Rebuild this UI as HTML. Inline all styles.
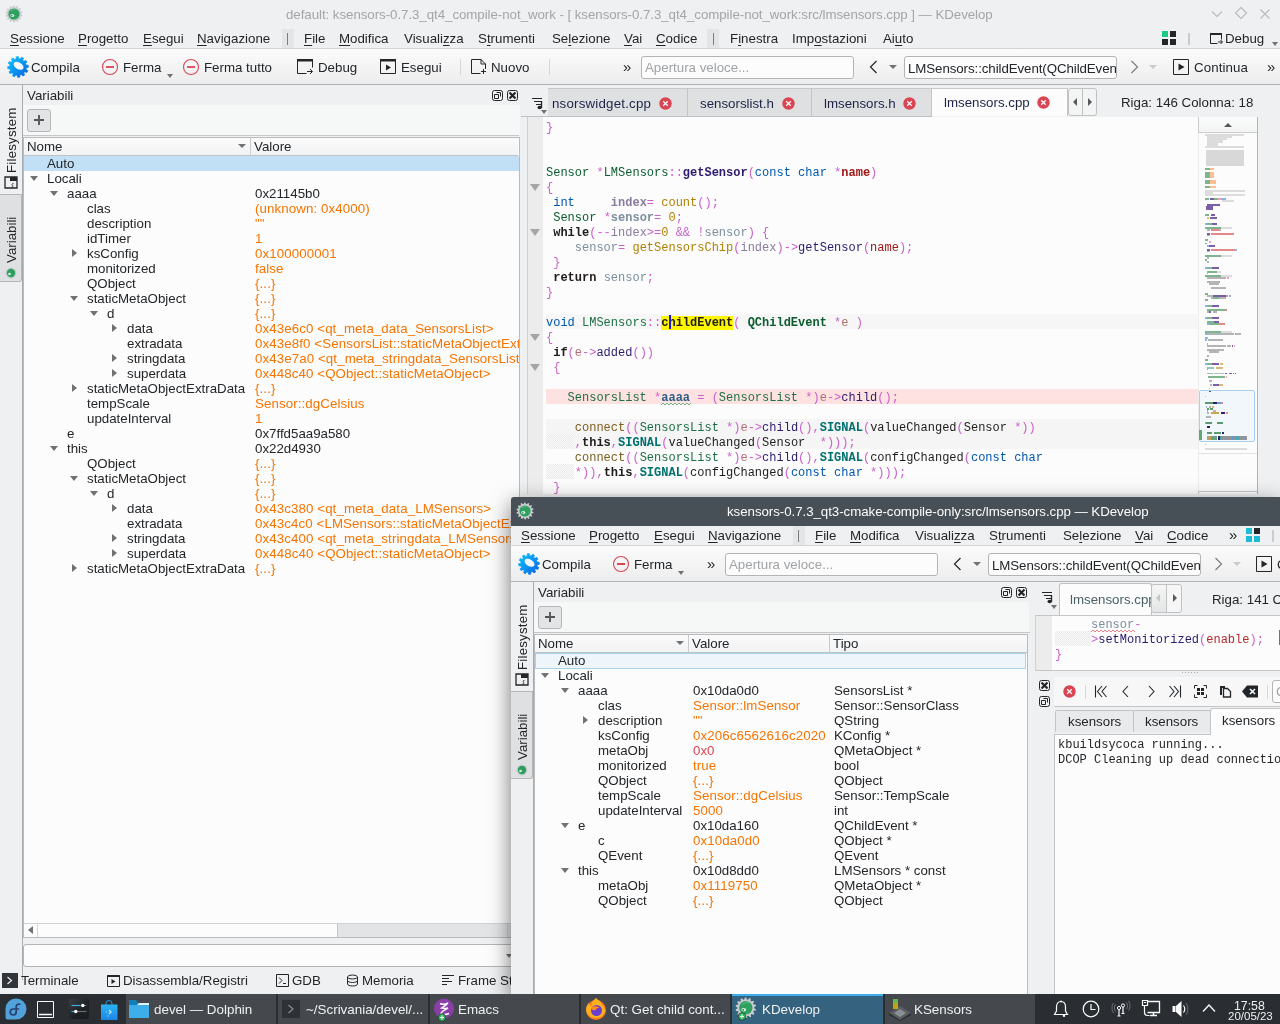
<!DOCTYPE html>
<html><head><meta charset="utf-8"><title>KDevelop</title>
<style>
*{box-sizing:border-box;margin:0;padding:0}
html,body{width:1280px;height:1024px;overflow:hidden}
body{position:relative;background:#eff0f1;font-family:"Liberation Sans",sans-serif;font-size:13.3px;color:#232629}
.a{position:absolute}
.t{position:absolute;white-space:pre;line-height:16px;height:16px;margin-top:1px}
u{text-decoration:underline;text-underline-offset:2px}
svg{position:absolute;overflow:visible}
/* main window */
#w1,#w2,.tb{will-change:transform}
#w1{position:absolute;left:0;top:0;width:1280px;height:994px;background:#eff0f1;overflow:hidden}
#w2{position:absolute;left:511px;top:497px;width:769px;height:497px;background:#eff0f1;overflow:hidden;box-shadow:0 7px 22px 0 rgba(0,0,0,.55);border-radius:3px 0 0 0}
.tool{background:linear-gradient(#fbfbfb,#ededee)}
.hl{position:absolute;height:1px;background:#bcbfc1}
.vl{position:absolute;width:1px;background:#bcbfc1}
.view{position:absolute;background:#fcfcfc;border:1px solid #b9bbbd}
.o{color:#f67400;letter-spacing:.1px}.r{color:#da4453}
.row{position:absolute;left:0;height:15px;line-height:15px;white-space:pre;margin-top:-1px}
.row span{position:absolute;top:0}
.arr{position:absolute;width:0;height:0}
.ad{border-left:4px solid transparent;border-right:4px solid transparent;border-top:5px solid #6e7275}
.ar{border-top:4px solid transparent;border-bottom:4px solid transparent;border-left:5px solid #6e7275}
.code{position:absolute;font-family:"Liberation Mono",monospace;font-size:12px;letter-spacing:0;line-height:15px;white-space:pre;color:#1f1c1b}
.code b{font-weight:bold}
.cl{position:absolute;left:0;height:15px;white-space:pre}
.m{color:#ca60ca}.g{color:#0a5c2e}.bl{color:#0057ae}.dp{color:#2b1a6e}.dr{color:#a01818}.gv{color:#8b7b9e}.go{color:#b08000}.gc{color:#7c5e1c}.pe{color:#b56d7d}.gb{color:#7a8e9e}.br{color:#b36e6c}.tl{color:#00706e}
.btn{position:absolute;border:1px solid #b4b6b8;border-radius:3px;background:#e3e4e5}
.tab{position:absolute;top:0;height:28px;border-right:1px solid #c2c4c6;border-top:1px solid #c6c8ca;background:#dfe0e2;color:#1c2446}
.tab .t{margin-top:0}
.tb{position:absolute;top:994px;left:0;width:1280px;height:30px;background:#2a2e32;color:#eff0f1}
</style></head><body>
<svg width="0" height="0" style="left:0;top:0"><defs><linearGradient id="gg" x1="0" y1="0" x2="1" y2="1"><stop offset="0" stop-color="#10c4ff"/><stop offset=".55" stop-color="#0a90f0"/><stop offset="1" stop-color="#0a58d8"/></linearGradient><g id="gear"><path d="M19.0 9.1L21.2 9.3L21.3 11.3L19.2 11.8L18.9 13.3L20.7 14.6L19.8 16.4L17.7 15.7L16.7 16.9L17.6 18.9L15.9 20.0L14.4 18.5L12.9 19.0L12.7 21.2L10.7 21.3L10.2 19.2L8.7 18.9L7.4 20.7L5.6 19.8L6.3 17.7L5.1 16.7L3.1 17.6L2.0 15.9L3.5 14.4L3.0 12.9L0.8 12.7L0.7 10.7L2.8 10.2L3.1 8.7L1.3 7.4L2.2 5.6L4.3 6.3L5.3 5.1L4.4 3.1L6.1 2.0L7.6 3.5L9.1 3.0L9.3 0.8L11.3 0.7L11.8 2.8L13.3 3.1L14.6 1.3L16.4 2.2L15.7 4.3L16.9 5.3L18.9 4.4L20.0 6.1L18.5 7.6z" fill="url(#gg)" stroke="url(#gg)" stroke-width=".8" stroke-linejoin="round"/><ellipse cx="11.600" cy="9.800" rx="5.400" ry="3.300" fill="#f4f8fc" transform="rotate(30 11.600 9.800)"/></g><g id="kdev"><path d="M16.0 9.3L17.5 10.2L17.3 11.3L15.6 11.5L15.2 12.3L16.2 13.7L15.5 14.7L13.8 14.1L13.1 14.7L13.4 16.4L12.4 16.9L11.2 15.7L10.2 15.9L9.8 17.6L8.6 17.6L8.1 15.9L7.1 15.7L6.0 17.1L4.9 16.6L5.1 14.8L4.4 14.3L2.8 14.9L2.0 14.1L3.0 12.6L2.6 11.8L0.8 11.7L0.5 10.5L2.0 9.6L2.0 8.7L0.5 7.8L0.7 6.7L2.4 6.5L2.8 5.7L1.8 4.3L2.5 3.3L4.2 3.9L4.9 3.3L4.6 1.6L5.6 1.1L6.8 2.3L7.8 2.1L8.2 0.4L9.4 0.4L9.9 2.1L10.9 2.3L12.0 0.9L13.1 1.4L12.9 3.2L13.6 3.7L15.2 3.1L16.0 3.9L15.0 5.4L15.4 6.2L17.2 6.3L17.5 7.5L16.0 8.4z" fill="#c9cdd0"/><circle cx="9" cy="9" r="5.600" fill="#2fa060"/><path d="M5.500 7a4.500 4.500 0 0 1 7-1.500A6 6 0 0 0 5.500 7z" fill="#7fd0a0"/><ellipse cx="7.300" cy="10.600" rx="2" ry="1.500" fill="#d8f4e2"/><circle cx="6.800" cy="10.800" r=".7" fill="#1f6e40"/></g></defs></svg>
<div id="w1">
<!-- title bar -->
<svg style="left:5px;top:5px" width="18" height="18" viewBox="0 0 18 18"><use href="#kdev"/></svg>
<svg style="left:1210px;top:8px" width="14" height="12" viewBox="0 0 14 12"><path d="M2 3.500l5 5 5-5" fill="none" stroke="#b9bcbe" stroke-width="1.200"/></svg>
<svg style="left:1234px;top:6px" width="14" height="14" viewBox="0 0 14 14"><path d="M7 1.500l5.500 5.500L7 12.500 1.500 7z" fill="none" stroke="#b9bcbe" stroke-width="1.200"/></svg>
<svg style="left:1259px;top:8px" width="12" height="12" viewBox="0 0 12 12"><path d="M1.500 1.500l9 9M10.500 1.500l-9 9" fill="none" stroke="#b9bcbe" stroke-width="1.200"/></svg>
<div class="t" style="left:286px;top:6px;color:#a3a5a7;letter-spacing:-.05px">default: ksensors-0.7.3_qt4_compile-not_work - [ ksensors-0.7.3_qt4_compile-not_work:src/lmsensors.cpp ] — KDevelop</div>
<!-- menubar -->
<div class="a" id="menu1" style="left:0;top:28px;width:1280px;height:21px">
<div class="t" style="left:10px;top:2px"><u>S</u>essione</div>
<div class="t" style="left:78px;top:2px"><u>P</u>rogetto</div>
<div class="t" style="left:143px;top:2px"><u>E</u>segui</div>
<div class="t" style="left:197px;top:2px"><u>N</u>avigazione</div>
<div class="a" style="left:282px;top:1px;width:12px;height:19px;background:#e3e5e6"></div><div class="vl" style="left:287px;top:5px;height:12px;background:#7b7e81"></div>
<div class="t" style="left:304px;top:2px"><u>F</u>ile</div>
<div class="t" style="left:339px;top:2px"><u>M</u>odifica</div>
<div class="t" style="left:404px;top:2px">Visuali<u>z</u>za</div>
<div class="t" style="left:478px;top:2px">S<u>t</u>rumenti</div>
<div class="t" style="left:552px;top:2px">Se<u>l</u>ezione</div>
<div class="t" style="left:624px;top:2px"><u>V</u>ai</div>
<div class="t" style="left:656px;top:2px"><u>C</u>odice</div>
<div class="a" style="left:707px;top:1px;width:12px;height:19px;background:#e3e5e6"></div><div class="vl" style="left:713px;top:5px;height:12px;background:#7b7e81"></div>
<div class="t" style="left:730px;top:2px">F<u>i</u>nestra</div>
<div class="t" style="left:792px;top:2px">Imp<u>o</u>stazioni</div>
<div class="t" style="left:883px;top:2px">Ai<u>u</u>to</div>
<div class="a" style="left:1162px;top:3px;width:6px;height:6px;background:#1cc888"></div>
<div class="a" style="left:1170px;top:3px;width:6px;height:6px;background:#232629"></div>
<div class="a" style="left:1162px;top:11px;width:6px;height:6px;background:#232629"></div>
<div class="a" style="left:1170px;top:11px;width:6px;height:6px;background:#232629"></div>
<div class="vl" style="left:1188px;top:5px;height:12px;width:2px;background:#c9cbcd"></div>
<svg style="left:1208px;top:2px" width="16" height="16" viewBox="0 0 16 16"><path d="M2 3h12v2H2z" fill="#232629"/><path d="M2.5 3.5v10h7M13.5 3.500v6" fill="none" stroke="#232629"/><path d="M10 12h4M12.500 10l2 2-2 2" fill="none" stroke="#232629"/></svg>
<div class="t" style="left:1225px;top:2px">Debug</div>
<div class="arr ad" style="left:1272px;top:14px;border-left-width:3px;border-right-width:3px;border-top-width:4px"></div>
</div>
<div class="hl" style="left:0;top:48px;width:1280px;background:#d1d3d4"></div>
<!-- toolbar -->
<div class="a tool" id="tool1" style="left:0;top:49px;width:1280px;height:35px">
<svg style="left:7px;top:7px" width="22" height="22" viewBox="0 0 22 22"><use href="#gear"/></svg>
<div class="t" style="left:31px;top:10px">Compila</div>
<svg style="left:101px;top:9px" width="18" height="18" viewBox="0 0 18 18"><circle cx="9" cy="9" r="7.500" fill="none" stroke="#da4453" stroke-width="1.100"/><path d="M5 9h8" stroke="#da4453" stroke-width="1.800"/></svg>
<div class="t" style="left:123px;top:10px">Ferma</div>
<div class="arr ad" style="left:167px;top:25px;border-left-width:3px;border-right-width:3px;border-top-width:4px"></div>
<svg style="left:182px;top:9px" width="18" height="18" viewBox="0 0 18 18"><circle cx="9" cy="9" r="7.500" fill="none" stroke="#da4453" stroke-width="1.100"/><path d="M5 9h8" stroke="#da4453" stroke-width="1.800"/></svg>
<div class="t" style="left:204px;top:10px">Ferma tutto</div>
<svg style="left:297px;top:9px" width="18" height="18" viewBox="0 0 18 18"><path d="M0 1h16v2.500H0z" fill="#232629"/><path d="M.5 1.500v14h9M15.500 1.500v8" fill="none" stroke="#232629"/><path d="M10 13.500h5M13 11l2.500 2.500L13 16" fill="none" stroke="#232629"/></svg>
<div class="t" style="left:318px;top:10px">Debug</div>
<svg style="left:380px;top:9px" width="18" height="18" viewBox="0 0 18 18"><path d="M0 1h16v2.500H0z" fill="#232629"/><path d="M.5 1.500h15v14H.5z" fill="none" stroke="#232629"/><path d="M6 6.500l5 3-5 3z" fill="#232629"/></svg>
<div class="t" style="left:401px;top:10px">Esegui</div>
<div class="vl" style="left:460px;top:10px;height:16px;background:#d5d7d8"></div>
<svg style="left:471px;top:9px" width="18" height="18" viewBox="0 0 18 18"><path d="M.5 1.500h9.500l4.500 4.500v5M.5 1.500v14h9" fill="none" stroke="#232629"/><path d="M10 1.500v4.500h4.500" fill="none" stroke="#232629"/><path d="M10 13.500h5M12.500 11v5" stroke="#232629" fill="none"/></svg>
<div class="t" style="left:491px;top:10px">Nuovo</div>
<div class="vl" style="left:549px;top:10px;height:16px;background:#d5d7d8"></div>
<div class="t" style="left:623px;top:9px;font-size:15px">»</div>
<div class="a" style="left:641px;top:7px;width:213px;height:23px;border:1px solid #b2b5b7;border-radius:3px;background:#fcfcfc"></div>
<div class="t" style="left:645px;top:10px;color:#a0a3a5">Apertura veloce...</div>
<svg style="left:868px;top:10px" width="12" height="16" viewBox="0 0 12 16"><path d="M8.500 2L2.500 8l6 6" fill="none" stroke="#232629" stroke-width="1.200"/></svg>
<div class="arr ad" style="left:889px;top:16px;border-left-width:4.500px;border-right-width:4.500px;border-top-width:4.500px"></div>
<div class="a" style="left:904px;top:7px;width:213px;height:23px;border:1px solid #b2b5b7;border-radius:3px;background:#fcfcfc;overflow:hidden"><div class="t" style="left:3px;top:3px;letter-spacing:-.08px">LMSensors::childEvent(QChildEvent</div></div>
<svg style="left:1128px;top:10px" width="12" height="16" viewBox="0 0 12 16"><path d="M3.500 2l6 6-6 6" fill="none" stroke="#7a7d80" stroke-width="1.200"/></svg>
<div class="arr ad" style="left:1149px;top:16px;border-left-width:4.500px;border-right-width:4.500px;border-top-width:4.500px;border-top-color:#c9cbcc"></div>
<svg style="left:1173px;top:9px" width="18" height="18" viewBox="0 0 18 18"><path d="M.5 1.500h15v15H.5z" fill="none" stroke="#232629"/><path d="M5.500 5.500l6 3.500-6 3.500z" fill="#232629"/></svg>
<div class="t" style="left:1194px;top:10px;letter-spacing:.1px">Continua</div>
<div class="t" style="left:1267px;top:9px;font-size:15px">»</div>
</div>
<div class="hl" style="left:0;top:84px;width:1280px;background:#b0b3b5"></div>
<!-- left sidebar -->
<div class="a" id="side1" style="left:0;top:85px;width:23px;height:895px">
<div class="a" style="left:0;top:109px;width:22px;height:88px;background:#dfe0e1;border:1px solid #b4b6b8;border-left:none;border-radius:0 0 3px 0"></div>
<div class="t" style="left:-20px;top:47px;width:64px;transform:rotate(-90deg);text-align:left;letter-spacing:.2px">Filesystem</div>
<svg style="left:4px;top:91px" width="14" height="13" viewBox="0 0 14 13"><path d="M1 1h12v11H1z" fill="none" stroke="#232629" stroke-width="1.300"/><path d="M6 1h7v4H6z" fill="#232629"/><path d="M9.500 7.500c-1.500 0-2 1-1 1.800s.5 2-1 1.800" fill="none" stroke="#232629" stroke-width=".9"/></svg>
<div class="t" style="left:-14px;top:143px;width:52px;transform:rotate(-90deg);text-align:left">Variabili</div>
<svg style="left:5px;top:182px" width="12" height="12" viewBox="0 0 12 12"><circle cx="6" cy="6" r="5.500" fill="#c9cdd0"/><circle cx="6" cy="6" r="4.200" fill="#2e9e5e"/><circle cx="4.500" cy="7" r="1.300" fill="#d6f3e0"/></svg>
</div>
<div class="vl" style="left:22px;top:85px;height:895px;background:#a9acae"></div>
<!-- Variabili panel -->
<div class="a" id="var1" style="left:23px;top:85px;width:497px;height:895px">
<div class="a" style="left:0;top:20px;width:497px;height:30px;background:#f6f7f7"></div>
<div class="t" style="left:4px;top:2px">Variabili</div>
<svg style="left:469px;top:5px" width="11" height="11" viewBox="0 0 11 11"><rect x=".5" y=".5" width="10" height="10" rx="2" fill="none" stroke="#232629"/><path d="M4.500 2.500h4v4M2.500 4.500h4v4h-4z" fill="none" stroke="#232629"/></svg>
<svg style="left:484px;top:5px" width="11" height="11" viewBox="0 0 11 11"><rect x=".5" y=".5" width="10" height="10" rx="2" fill="none" stroke="#232629"/><path d="M2.500 2.500l6 6M8.500 2.500l-6 6" stroke="#232629" stroke-width="2.200"/></svg>
<div class="btn" style="left:4px;top:24px;width:24px;height:23px"></div>
<svg style="left:10px;top:29px" width="12" height="12" viewBox="0 0 12 12"><path d="M1 6h4M7 6h4M6 1v10" stroke="#232629" stroke-width="1.400" fill="none"/></svg>
<div class="hl" style="left:0;top:50px;width:496px;background:#c4c6c8"></div>
<div class="view" style="left:0;top:52px;width:497px;height:801px;overflow:hidden">
<div class="a" style="left:0;top:0;width:494px;height:18px;background:linear-gradient(#fbfbfb,#f1f2f3);border-bottom:1px solid #bfc1c3"></div>
<div class="vl" style="left:226px;top:0;height:18px;background:#c9cbcd"></div>
<div class="t" style="left:3px;top:0">Nome</div>
<div class="arr ad" style="left:214px;top:6px;border-left-width:4px;border-right-width:4px;border-top-width:4px"></div>
<div class="t" style="left:230px;top:0">Valore</div>
<div class="row" style="top:19px;background:#c2e0f5;width:496px"><span style="left:23px">Auto</span></div>
<div class="row" style="top:34px"><i class="arr ad" style="left:6px;top:5px"></i><span style="left:23px">Locali</span></div>
<div class="row" style="top:49px"><i class="arr ad" style="left:26px;top:5px"></i><span style="left:43px">aaaa</span><span class="" style="left:231px">0x21145b0</span></div>
<div class="row" style="top:64px"><span style="left:63px">clas</span><span class="o" style="left:231px">(unknown: 0x4000)</span></div>
<div class="row" style="top:79px"><span style="left:63px">description</span><span class="o" style="left:231px">""</span></div>
<div class="row" style="top:94px"><span style="left:63px">idTimer</span><span class="o" style="left:231px">1</span></div>
<div class="row" style="top:109px"><i class="arr ar" style="left:48px;top:3px"></i><span style="left:63px">ksConfig</span><span class="o" style="left:231px">0x100000001</span></div>
<div class="row" style="top:124px"><span style="left:63px">monitorized</span><span class="o" style="left:231px">false</span></div>
<div class="row" style="top:139px"><span style="left:63px">QObject</span><span class="o" style="left:231px">{...}</span></div>
<div class="row" style="top:154px"><i class="arr ad" style="left:46px;top:5px"></i><span style="left:63px">staticMetaObject</span><span class="o" style="left:231px">{...}</span></div>
<div class="row" style="top:169px"><i class="arr ad" style="left:66px;top:5px"></i><span style="left:83px">d</span><span class="o" style="left:231px">{...}</span></div>
<div class="row" style="top:184px"><i class="arr ar" style="left:88px;top:3px"></i><span style="left:103px">data</span><span class="o" style="left:231px">0x43e6c0 &lt;qt_meta_data_SensorsList&gt;</span></div>
<div class="row" style="top:199px"><span style="left:103px">extradata</span><span class="o" style="left:231px">0x43e8f0 &lt;SensorsList::staticMetaObjectExtraData&gt;</span></div>
<div class="row" style="top:214px"><i class="arr ar" style="left:88px;top:3px"></i><span style="left:103px">stringdata</span><span class="o" style="left:231px">0x43e7a0 &lt;qt_meta_stringdata_SensorsList&gt;</span></div>
<div class="row" style="top:229px"><i class="arr ar" style="left:88px;top:3px"></i><span style="left:103px">superdata</span><span class="o" style="left:231px">0x448c40 &lt;QObject::staticMetaObject&gt;</span></div>
<div class="row" style="top:244px"><i class="arr ar" style="left:48px;top:3px"></i><span style="left:63px">staticMetaObjectExtraData</span><span class="o" style="left:231px">{...}</span></div>
<div class="row" style="top:259px"><span style="left:63px">tempScale</span><span class="o" style="left:231px">Sensor::dgCelsius</span></div>
<div class="row" style="top:274px"><span style="left:63px">updateInterval</span><span class="o" style="left:231px">1</span></div>
<div class="row" style="top:289px"><span style="left:43px">e</span><span class="" style="left:231px">0x7ffd5aa9a580</span></div>
<div class="row" style="top:304px"><i class="arr ad" style="left:26px;top:5px"></i><span style="left:43px">this</span><span class="" style="left:231px">0x22d4930</span></div>
<div class="row" style="top:319px"><span style="left:63px">QObject</span><span class="o" style="left:231px">{...}</span></div>
<div class="row" style="top:334px"><i class="arr ad" style="left:46px;top:5px"></i><span style="left:63px">staticMetaObject</span><span class="o" style="left:231px">{...}</span></div>
<div class="row" style="top:349px"><i class="arr ad" style="left:66px;top:5px"></i><span style="left:83px">d</span><span class="o" style="left:231px">{...}</span></div>
<div class="row" style="top:364px"><i class="arr ar" style="left:88px;top:3px"></i><span style="left:103px">data</span><span class="o" style="left:231px">0x43c380 &lt;qt_meta_data_LMSensors&gt;</span></div>
<div class="row" style="top:379px"><span style="left:103px">extradata</span><span class="o" style="left:231px">0x43c4c0 &lt;LMSensors::staticMetaObjectExtraData&gt;</span></div>
<div class="row" style="top:394px"><i class="arr ar" style="left:88px;top:3px"></i><span style="left:103px">stringdata</span><span class="o" style="left:231px">0x43c400 &lt;qt_meta_stringdata_LMSensors&gt;</span></div>
<div class="row" style="top:409px"><i class="arr ar" style="left:88px;top:3px"></i><span style="left:103px">superdata</span><span class="o" style="left:231px">0x448c40 &lt;QObject::staticMetaObject&gt;</span></div>
<div class="row" style="top:424px"><i class="arr ar" style="left:48px;top:3px"></i><span style="left:63px">staticMetaObjectExtraData</span><span class="o" style="left:231px">{...}</span></div>
</div>
<!-- h scrollbar -->
<div class="a" style="left:1px;top:838px;width:495px;height:14px;background:#e3e4e5;border-top:1px solid #cfd1d2"></div>
<div class="a" style="left:1px;top:839px;width:314px;height:13px;background:#fcfcfc;border-right:1px solid #c4c6c8"></div>
<div class="vl" style="left:14px;top:839px;height:13px;background:#d4d6d7"></div>
<div class="vl" style="left:484px;top:839px;height:13px;background:#cfd1d2"></div>
<div class="arr" style="left:5px;top:841px;border-top:4px solid transparent;border-bottom:4px solid transparent;border-right:5px solid #6e7275"></div>
<!-- combo -->
<div class="a" style="left:0;top:859px;width:497px;height:23px;border:1px solid #b2b5b7;border-radius:3px;background:#fcfcfc"></div>

<div class="arr ad" style="left:483px;top:869px;border-left-width:3px;border-right-width:3px;border-top-width:4px"></div>
</div>
<!-- bottom toolview tabs -->
<div class="a" id="bot1" style="left:0;top:970px;width:520px;height:24px">
<div class="a" style="left:2px;top:3px;width:16px;height:15px;background:#31363b"></div>
<svg style="left:5px;top:5px" width="10" height="11" viewBox="0 0 10 11"><path d="M2.500 2l4 3.500-4 3.500" fill="none" stroke="#eff0f1" stroke-width="1.200"/></svg>
<div class="t" style="left:21px;top:2px">Terminale</div>
<svg style="left:107px;top:4px" width="13" height="13" viewBox="0 0 13 13"><path d="M.5 1h12v2H.5z" fill="#232629"/><path d="M.5 1.500h12v11H.5z" fill="none" stroke="#232629"/><path d="M4.500 5l4 2.500-4 2.500z" fill="#232629"/></svg>
<div class="t" style="left:123px;top:2px">Disassembla/Registri</div>
<svg style="left:276px;top:4px" width="13" height="13" viewBox="0 0 13 13"><path d="M.5 .5h12v12H.5z" fill="none" stroke="#232629"/><path d="M3 3.500l3 3-3 3M7 9.500h3" fill="none" stroke="#232629"/></svg>
<div class="t" style="left:292px;top:2px">GDB</div>
<svg style="left:346px;top:4px" width="13" height="13" viewBox="0 0 13 13"><ellipse cx="6.500" cy="3" rx="5" ry="2" fill="none" stroke="#232629"/><path d="M1.500 3v7c0 1.100 2.200 2 5 2s5-.9 5-2V3M1.500 6.500c0 1.100 2.200 2 5 2s5-.9 5-2" fill="none" stroke="#232629"/></svg>
<div class="t" style="left:362px;top:2px">Memoria</div>
<svg style="left:442px;top:4px" width="13" height="13" viewBox="0 0 13 13"><path d="M0 1.500h12M0 4.500h7M0 7.500h10M0 10.500h5" stroke="#232629" fill="none"/></svg>
<div class="t" style="left:458px;top:2px">Frame Stack</div>
</div>
<!-- editor 1 -->
<div class="a" id="ed1" style="left:521px;top:85px;width:759px;height:909px">
<div class="a" style="left:0;top:0;width:759px;height:32px;background:#eff0f1"></div>
<svg style="left:10px;top:11px" width="14" height="16" viewBox="0 0 14 16"><path d="M1 2.500h10M3 5.500h8M5 8.500h6" stroke="#232629" fill="none"/><path d="M10.500 5v7" stroke="#232629" stroke-width="1.300"/><ellipse cx="8.700" cy="11.500" rx="2.200" ry="1.700" fill="#232629"/></svg>
<div class="arr ad" style="left:20px;top:25px;border-left-width:3px;border-right-width:3px;border-top-width:4px"></div>
<div class="a" style="left:27px;top:3px;width:520px;height:28px;overflow:hidden">
<div class="tab" style="left:0;width:140px"><div class="t" style="left:4px;top:7px;letter-spacing:.2px">nsorswidget.cpp</div><svg style="left:111px;top:8px" width="13" height="13" viewBox="0 0 13 13"><circle cx="6.500" cy="6.500" r="6.200" fill="#da4453"/><path d="M4.200 4.200l4.600 4.600M8.800 4.200l-4.600 4.600" stroke="#fcfcfc" stroke-width="1.300"/></svg></div>
<div class="tab" style="left:140px;width:124px"><div class="t" style="left:12px;top:7px">sensorslist.h</div><svg style="left:94px;top:8px" width="13" height="13" viewBox="0 0 13 13"><circle cx="6.500" cy="6.500" r="6.200" fill="#da4453"/><path d="M4.200 4.200l4.600 4.600M8.800 4.200l-4.600 4.600" stroke="#fcfcfc" stroke-width="1.300"/></svg></div>
<div class="tab" style="left:264px;width:120px"><div class="t" style="left:12px;top:7px">lmsensors.h</div><svg style="left:91px;top:8px" width="13" height="13" viewBox="0 0 13 13"><circle cx="6.500" cy="6.500" r="6.200" fill="#da4453"/><path d="M4.200 4.200l4.600 4.600M8.800 4.200l-4.600 4.600" stroke="#fcfcfc" stroke-width="1.300"/></svg></div>
<div class="tab" style="left:384px;width:136px;background:#fcfcfc"><div class="t" style="left:12px;top:6px">lmsensors.cpp</div><svg style="left:105px;top:7px" width="13" height="13" viewBox="0 0 13 13"><circle cx="6.500" cy="6.500" r="6.200" fill="#da4453"/><path d="M4.200 4.200l4.600 4.600M8.800 4.200l-4.600 4.600" stroke="#fcfcfc" stroke-width="1.300"/></svg></div>
</div>
<div class="hl" style="left:0;top:31px;width:411px;background:#bfc1c3"></div>
<div class="a" style="left:547px;top:3px;width:15px;height:28px;border:1px solid #bfc1c3;border-radius:3px 0 0 3px;background:#f3f4f4"></div>
<div class="a" style="left:561px;top:3px;width:15px;height:28px;border:1px solid #bfc1c3;border-radius:0 3px 3px 0;background:#f3f4f4"></div>
<div class="arr" style="left:552px;top:13px;border-top:4px solid transparent;border-bottom:4px solid transparent;border-right:4px solid #55595c"></div>
<div class="arr" style="left:567px;top:13px;border-top:4px solid transparent;border-bottom:4px solid transparent;border-left:4px solid #55595c"></div>
<div class="t" style="left:600px;top:9px">Riga: 146 Colonna: 18</div>
<!-- code view -->
<div class="a" style="left:6px;top:32px;width:731px;height:377px;background:#fcfcfc;overflow:hidden">
<div class="a" style="left:0;top:0;width:16px;height:377px;background:#ececec;border-left:1px solid #cfd1d2"></div>
<i class="arr ad" style="left:2.500px;top:67px;border-left-width:5.500px;border-right-width:5.500px;border-top-width:7px;border-top-color:#a3a5a7"></i><i class="arr ad" style="left:2.500px;top:112px;border-left-width:5.500px;border-right-width:5.500px;border-top-width:7px;border-top-color:#a3a5a7"></i><i class="arr ad" style="left:2.500px;top:217px;border-left-width:5.500px;border-right-width:5.500px;border-top-width:7px;border-top-color:#a3a5a7"></i><i class="arr ad" style="left:2.500px;top:247px;border-left-width:5.500px;border-right-width:5.500px;border-top-width:7px;border-top-color:#a3a5a7"></i>
<div class="a" style="left:19px;top:197px;width:652px;height:15px;background:#f6f6f6"></div>
<div class="a" style="left:19px;top:272px;width:652px;height:15px;background:#fee1e1"></div>
<div class="a" style="left:19px;top:302px;width:652px;height:30px;background:#f5f5f5"></div>
<div class="a" style="left:19px;top:347px;width:28px;height:15px;background:repeating-conic-gradient(#e8e8e8 0 25%,#fcfcfc 0 50%) 0 0/2px 2px"></div>
<div class="a" style="left:19px;top:317px;width:28px;height:15px;background:repeating-conic-gradient(#e8e8e8 0 25%,#fcfcfc 0 50%) 0 0/2px 2px"></div>
<div class="code" style="left:19px;top:4px;width:652px">
<div class="cl" style="top:0px"><span class="m">}</span></div>
<div class="cl" style="top:45px"><span class="g">Sensor</span> <span class="m">*</span><span class="g">LMSensors</span><span class="m">::</span><b class="dp">getSensor</b><span class="m">(</span><span class="bl">const char</span> <span class="m">*</span><b class="dr">name</b><span class="m">)</span></div>
<div class="cl" style="top:60px"><span class="m">{</span></div>
<div class="cl" style="top:75px"> <span class="bl">int</span>     <b class="gv">index</b><span class="m">=</span> <span class="go">count</span><span class="m">();</span></div>
<div class="cl" style="top:90px"> <span class="g">Sensor</span> <span class="m">*</span><b class="gb">sensor</b><span class="m">=</span> <span class="go">0</span><span class="m">;</span></div>
<div class="cl" style="top:105px"> <b>while</b><span class="m">(--</span><span class="gv">index</span><span class="m">&gt;=</span><span class="go">0</span> <span class="m">&amp;&amp; !</span><span class="gb">sensor</span><span class="m">) {</span></div>
<div class="cl" style="top:120px">    <span class="gb">sensor</span><span class="m">=</span> <span class="go">getSensorsChip</span><span class="m">(</span><span class="gv">index</span><span class="m">)-&gt;</span><span class="dp">getSensor</span><span class="m">(</span><span class="dr">name</span><span class="m">);</span></div>
<div class="cl" style="top:135px"> <span class="m">}</span></div>
<div class="cl" style="top:150px"> <b>return</b> <span class="gb">sensor</span><span class="m">;</span></div>
<div class="cl" style="top:165px"><span class="m">}</span></div>
<div class="cl" style="top:195px"><span class="bl">void</span> <span class="g" style="color:#1d7044">LMSensors</span><span class="m">::</span><b style="background:#fff700">childEvent</b><span class="m">(</span> <b class="g">QChildEvent</b> <span class="m">*</span><span class="br">e</span> <span class="m">)</span></div>
<div class="cl" style="top:210px"><span class="m">{</span></div>
<div class="cl" style="top:225px"> <b>if</b><span class="m">(</span><span class="pe">e</span><span class="m">-&gt;</span><span class="dp">added</span><span class="m">())</span></div>
<div class="cl" style="top:240px"> <span class="m">{</span></div>
<div class="cl" style="top:270px">   <span class="g" style="color:#1d7044">SensorsList</span> <span class="m">*</span><b class="gv" style="color:#2d5f88;position:relative">aaaa<svg style="left:0;top:12px" width="29" height="3" viewBox="0 0 29 3"><path d="M0 2L2 0L4 2L6 0L8 2L10 0L12 2L14 0L16 2L18 0L20 2L22 0L24 2L26 0L28 2L30 0" fill="none" stroke="#46a86a" stroke-width=".8"/></svg></b> <span class="m">= (</span><span class="g" style="color:#1d7044">SensorsList</span> <span class="m">*)</span><span class="pe">e</span><span class="m">-&gt;</span><span class="dp">child</span><span class="m">();</span></div>
<div class="cl" style="top:300px">    <span class="gc">connect</span><span class="m">((</span><span class="g" style="color:#1d7044">SensorsList</span> <span class="m">*)</span><span class="pe">e</span><span class="m">-&gt;</span><span class="dp">child</span><span class="m">(),</span><b class="tl">SIGNAL</b><span class="m">(</span>valueChanged<span class="m">(</span>Sensor <span class="m">*))</span></div>
<div class="cl" style="top:315px">    <span class="m">,</span><b>this</b><span class="m">,</span><b class="tl">SIGNAL</b><span class="m">(</span>valueChanged<span class="m">(</span>Sensor  <span class="m">*)));</span></div>
<div class="cl" style="top:330px">    <span class="gc">connect</span><span class="m">((</span><span class="g" style="color:#1d7044">SensorsList</span> <span class="m">*)</span><span class="pe">e</span><span class="m">-&gt;</span><span class="dp">child</span><span class="m">(),</span><b class="tl">SIGNAL</b><span class="m">(</span>configChanged<span class="m">(</span><span class="bl">const char</span></div>
<div class="cl" style="top:345px">    <span class="m">*)),</span><b>this</b><span class="m">,</span><b class="tl">SIGNAL</b><span class="m">(</span>configChanged<span class="m">(</span><span class="bl">const char</span> <span class="m">*)));</span></div>
<div class="cl" style="top:360px"> <span class="m">}</span></div>
</div>
<div class="a" style="left:142px;top:198px;width:2px;height:14px;background:#1a1ae0"></div>
<!-- minimap -->
<div class="a" id="mini" style="left:671px;top:0;width:60px;height:377px;background:#fcfcfc;overflow:hidden"><div class="a" style="left:0;top:0;width:60px;height:16px;border:1px solid #c9cbcd;border-top:none;background:linear-gradient(#fcfcfc,#f3f4f4)"></div><i class="arr" style="left:26px;top:6px;border-left:4px solid transparent;border-right:4px solid transparent;border-bottom:4px solid #55595c"></i><div class="vl" style="left:0;top:16px;height:361px;background:#ececec"></div><div class="a" style="left:0.8px;top:273.2px;width:56.6px;height:52.0px;background:#f2f7fc;border:1px solid #a6d0ee;border-radius:2px"></div><i class="a" style="left:7.2px;top:16.9px;width:38.5px;height:2.0px;background:#dcdcdc"></i><i class="a" style="left:9.2px;top:18.9px;width:24.8px;height:2.0px;background:#dcdcdc"></i><i class="a" style="left:9.2px;top:20.9px;width:19.9px;height:2.5px;background:#dcdcdc"></i><i class="a" style="left:9.2px;top:23.4px;width:16.0px;height:2.9px;background:#dcdcdc"></i><i class="a" style="left:8.6px;top:26.3px;width:11.7px;height:2.3px;background:#dcdcdc"></i><i class="a" style="left:7.2px;top:28.7px;width:38.5px;height:2.0px;background:#dcdcdc"></i><i class="a" style="left:7.6px;top:33.2px;width:38.1px;height:15.6px;background:#d8d8d8"></i><i class="a" style="left:7.2px;top:50.7px;width:4.7px;height:2.3px;background:#7fb58e"></i><i class="a" style="left:11.9px;top:50.7px;width:3.9px;height:2.3px;background:#ffbd94"></i><i class="a" style="left:7.2px;top:55.0px;width:4.7px;height:5.9px;background:#7fb58e"></i><i class="a" style="left:11.9px;top:55.0px;width:4.5px;height:5.9px;background:#ffbd94"></i><i class="a" style="left:7.2px;top:63.0px;width:4.7px;height:3.7px;background:#7fb58e"></i><i class="a" style="left:11.9px;top:63.0px;width:6.4px;height:3.7px;background:#ffbd94"></i><i class="a" style="left:7.2px;top:69.1px;width:4.7px;height:2.0px;background:#7fb58e"></i><i class="a" style="left:11.9px;top:69.1px;width:5.9px;height:2.0px;background:#ffbd94"></i><i class="a" style="left:7.2px;top:73.2px;width:39.8px;height:2.0px;background:#dcdcdc"></i><i class="a" style="left:7.2px;top:75.1px;width:8.2px;height:2.0px;background:#dcdcdc"></i><i class="a" style="left:7.2px;top:77.1px;width:39.8px;height:1.6px;background:#dcdcdc"></i><i class="a" style="left:7.2px;top:81.0px;width:4.3px;height:2.0px;background:#7fb58e"></i><i class="a" style="left:11.5px;top:81.0px;width:4.3px;height:2.0px;background:#7a5fa8"></i><i class="a" style="left:15.8px;top:81.0px;width:4.5px;height:2.0px;background:#7fb58e"></i><i class="a" style="left:20.3px;top:81.0px;width:2.9px;height:2.0px;background:#f0a0b8"></i><i class="a" style="left:23.2px;top:81.0px;width:4.9px;height:2.0px;background:#8cb4e4"></i><i class="a" style="left:24.2px;top:83.0px;width:11.7px;height:2.0px;background:#dcdcdc"></i><i class="a" style="left:8.6px;top:86.9px;width:13.7px;height:2.0px;background:#7a5fa8"></i><i class="a" style="left:8.0px;top:88.8px;width:7.4px;height:3.9px;background:#7a5fa8"></i><i class="a" style="left:7.2px;top:97.0px;width:4.3px;height:1.5px;background:#7fb58e"></i><i class="a" style="left:13.1px;top:97.0px;width:3.9px;height:1.5px;background:#7a5fa8"></i><i class="a" style="left:8.6px;top:99.6px;width:2.0px;height:2.3px;background:#e0c060"></i><i class="a" style="left:11.9px;top:99.6px;width:7.0px;height:2.3px;background:#7a5fa8"></i><i class="a" style="left:7.2px;top:106.0px;width:1.4px;height:2.0px;background:#8cb4e4"></i><i class="a" style="left:8.6px;top:106.0px;width:5.3px;height:2.0px;background:#7fb58e"></i><i class="a" style="left:13.9px;top:106.0px;width:5.1px;height:2.0px;background:#7a5fa8"></i><i class="a" style="left:7.2px;top:109.9px;width:15.6px;height:2.0px;background:#7fb58e"></i><i class="a" style="left:22.9px;top:109.9px;width:11.1px;height:2.0px;background:#dcdcdc"></i><i class="a" style="left:8.6px;top:111.9px;width:3.9px;height:2.0px;background:#b4b4b4"></i><i class="a" style="left:12.5px;top:111.9px;width:8.8px;height:2.0px;background:#e48888"></i><i class="a" style="left:21.3px;top:111.9px;width:1.6px;height:2.0px;background:#b4b4b4"></i><i class="a" style="left:9.2px;top:116.0px;width:3.3px;height:2.0px;background:#7a5fa8"></i><i class="a" style="left:12.5px;top:116.0px;width:23.4px;height:2.0px;background:#e48888"></i><i class="a" style="left:9.2px;top:117.9px;width:3.3px;height:1.6px;background:#b4b4b4"></i><i class="a" style="left:7.2px;top:122.0px;width:2.7px;height:2.0px;background:#7fb58e"></i><i class="a" style="left:10.6px;top:124.0px;width:2.0px;height:2.0px;background:#f0a0b8"></i><i class="a" style="left:7.2px;top:125.9px;width:2.0px;height:1.6px;background:#7fb58e"></i><i class="a" style="left:8.6px;top:127.9px;width:2.0px;height:2.0px;background:#8cb4e4"></i><i class="a" style="left:11.1px;top:127.9px;width:6.2px;height:2.0px;background:#7a5fa8"></i><i class="a" style="left:9.2px;top:132.0px;width:3.3px;height:2.0px;background:#7a5fa8"></i><i class="a" style="left:12.5px;top:132.0px;width:24.0px;height:2.0px;background:#e48888"></i><i class="a" style="left:36.5px;top:132.0px;width:2.0px;height:2.0px;background:#8cb4e4"></i><i class="a" style="left:9.2px;top:133.9px;width:3.3px;height:1.6px;background:#b4b4b4"></i><i class="a" style="left:7.2px;top:137.8px;width:15.6px;height:2.0px;background:#7fb58e"></i><i class="a" style="left:22.9px;top:137.8px;width:11.1px;height:2.0px;background:#dcdcdc"></i><i class="a" style="left:8.6px;top:140.2px;width:2.9px;height:1.5px;background:#b4b4b4"></i><i class="a" style="left:7.2px;top:142.1px;width:2.3px;height:1.6px;background:#7fb58e"></i><i class="a" style="left:8.6px;top:144.1px;width:2.9px;height:1.6px;background:#b4b4b4"></i><i class="a" style="left:7.2px;top:150.0px;width:1.4px;height:2.0px;background:#8cb4e4"></i><i class="a" style="left:8.6px;top:150.0px;width:5.3px;height:2.0px;background:#7fb58e"></i><i class="a" style="left:13.9px;top:150.0px;width:7.0px;height:2.0px;background:#7a5fa8"></i><i class="a" style="left:8.6px;top:153.9px;width:1.4px;height:2.0px;background:#8cb4e4"></i><i class="a" style="left:10.0px;top:153.9px;width:9.0px;height:2.0px;background:#7fb58e"></i><i class="a" style="left:19.0px;top:153.9px;width:3.9px;height:2.0px;background:#dcdcdc"></i><i class="a" style="left:8.6px;top:155.8px;width:1.0px;height:1.6px;background:#8cb4e4"></i><i class="a" style="left:7.2px;top:158.0px;width:15.6px;height:2.0px;background:#7fb58e"></i><i class="a" style="left:22.9px;top:158.0px;width:11.1px;height:2.0px;background:#dcdcdc"></i><i class="a" style="left:8.6px;top:159.9px;width:19.5px;height:2.0px;background:#b4b4b4"></i><i class="a" style="left:29.1px;top:159.9px;width:1.6px;height:2.0px;background:#f0a0b8"></i><i class="a" style="left:9.2px;top:164.0px;width:11.7px;height:2.0px;background:#b4b4b4"></i><i class="a" style="left:20.9px;top:164.0px;width:1.0px;height:2.0px;background:#e48888"></i><i class="a" style="left:11.1px;top:166.0px;width:10.2px;height:1.6px;background:#b4b4b4"></i><i class="a" style="left:12.5px;top:169.9px;width:1.0px;height:2.0px;background:#8cb4e4"></i><i class="a" style="left:13.5px;top:169.9px;width:14.6px;height:2.0px;background:#b4b4b4"></i><i class="a" style="left:7.2px;top:176.1px;width:2.7px;height:1.6px;background:#7fb58e"></i><i class="a" style="left:8.6px;top:178.1px;width:6.4px;height:2.0px;background:#b4b4b4"></i><i class="a" style="left:15.0px;top:178.1px;width:13.1px;height:2.0px;background:#7a5fa8"></i><i class="a" style="left:28.1px;top:178.1px;width:2.0px;height:2.0px;background:#e48888"></i><i class="a" style="left:31.1px;top:178.1px;width:2.3px;height:2.0px;background:#8cb4e4"></i><i class="a" style="left:12.5px;top:180.0px;width:2.9px;height:2.0px;background:#b4b4b4"></i><i class="a" style="left:15.4px;top:180.0px;width:5.9px;height:2.0px;background:#7fb58e"></i><i class="a" style="left:21.3px;top:180.0px;width:6.8px;height:2.0px;background:#b4b4b4"></i><i class="a" style="left:7.2px;top:182.2px;width:2.7px;height:1.6px;background:#7fb58e"></i><i class="a" style="left:7.2px;top:188.0px;width:1.4px;height:2.0px;background:#8cb4e4"></i><i class="a" style="left:8.6px;top:188.0px;width:5.3px;height:2.0px;background:#7fb58e"></i><i class="a" style="left:13.9px;top:188.0px;width:7.0px;height:2.0px;background:#7a5fa8"></i><i class="a" style="left:8.6px;top:191.9px;width:18.6px;height:2.0px;background:#7fb58e"></i><i class="a" style="left:27.2px;top:191.9px;width:2.3px;height:2.0px;background:#e48888"></i><i class="a" style="left:8.6px;top:193.9px;width:2.0px;height:2.0px;background:#b4b4b4"></i><i class="a" style="left:11.1px;top:193.9px;width:2.0px;height:2.0px;background:#7a5fa8"></i><i class="a" style="left:15.0px;top:193.9px;width:4.3px;height:2.0px;background:#b4b4b4"></i><i class="a" style="left:7.2px;top:200.2px;width:1.4px;height:2.0px;background:#8cb4e4"></i><i class="a" style="left:8.6px;top:200.2px;width:5.3px;height:2.0px;background:#7fb58e"></i><i class="a" style="left:13.9px;top:200.2px;width:7.4px;height:2.0px;background:#7a5fa8"></i><i class="a" style="left:8.6px;top:204.1px;width:7.2px;height:2.0px;background:#7fb58e"></i><i class="a" style="left:15.8px;top:204.1px;width:5.5px;height:2.0px;background:#7a5fa8"></i><i class="a" style="left:9.2px;top:206.0px;width:1.4px;height:2.0px;background:#8cb4e4"></i><i class="a" style="left:10.6px;top:206.0px;width:10.7px;height:2.0px;background:#7fb58e"></i><i class="a" style="left:21.3px;top:206.0px;width:5.5px;height:2.0px;background:#e48888"></i><i class="a" style="left:7.2px;top:214.2px;width:15.6px;height:2.0px;background:#7fb58e"></i><i class="a" style="left:22.9px;top:214.2px;width:11.1px;height:2.0px;background:#dcdcdc"></i><i class="a" style="left:7.2px;top:216.2px;width:1.4px;height:2.0px;background:#8cb4e4"></i><i class="a" style="left:8.6px;top:216.2px;width:10.7px;height:2.0px;background:#b4b4b4"></i><i class="a" style="left:19.3px;top:216.2px;width:1.6px;height:2.0px;background:#8cb4e4"></i><i class="a" style="left:20.9px;top:216.2px;width:15.6px;height:2.0px;background:#b4b4b4"></i><i class="a" style="left:36.5px;top:216.2px;width:1.4px;height:2.0px;background:#8cb4e4"></i><i class="a" style="left:37.9px;top:216.2px;width:4.9px;height:2.0px;background:#b4b4b4"></i><i class="a" style="left:7.2px;top:220.1px;width:3.3px;height:1.6px;background:#8cb4e4"></i><i class="a" style="left:7.2px;top:222.1px;width:2.3px;height:2.0px;background:#8cb4e4"></i><i class="a" style="left:9.6px;top:222.1px;width:15.2px;height:2.0px;background:#b4b4b4"></i><i class="a" style="left:8.6px;top:226.4px;width:1.0px;height:1.6px;background:#b4b4b4"></i><i class="a" style="left:8.6px;top:228.3px;width:19.5px;height:1.6px;background:#b4b4b4"></i><i class="a" style="left:29.1px;top:228.3px;width:3.9px;height:1.6px;background:#b4b4b4"></i><i class="a" style="left:34.4px;top:228.3px;width:0.6px;height:1.6px;background:#7a5fa8"></i><i class="a" style="left:36.3px;top:228.3px;width:0.6px;height:1.6px;background:#f0a0b8"></i><i class="a" style="left:9.2px;top:232.2px;width:16.4px;height:2.0px;background:#b4b4b4"></i><i class="a" style="left:10.6px;top:234.2px;width:10.4px;height:1.6px;background:#b4b4b4"></i><i class="a" style="left:8.6px;top:238.3px;width:2.0px;height:1.6px;background:#b4b4b4"></i><i class="a" style="left:7.2px;top:242.2px;width:2.7px;height:1.6px;background:#7fb58e"></i><i class="a" style="left:7.2px;top:245.9px;width:1.4px;height:2.0px;background:#8cb4e4"></i><i class="a" style="left:8.6px;top:245.9px;width:5.3px;height:2.0px;background:#7fb58e"></i><i class="a" style="left:13.9px;top:245.9px;width:7.4px;height:2.0px;background:#7a5fa8"></i><i class="a" style="left:21.7px;top:245.9px;width:3.1px;height:2.0px;background:#d8b878"></i><i class="a" style="left:8.6px;top:250.0px;width:1.4px;height:2.0px;background:#8cb4e4"></i><i class="a" style="left:10.0px;top:250.0px;width:6.4px;height:2.0px;background:#8cc8c0"></i><i class="a" style="left:18.4px;top:250.0px;width:6.8px;height:2.0px;background:#d8b878"></i><i class="a" style="left:8.6px;top:251.9px;width:1.0px;height:1.6px;background:#7fb58e"></i><i class="a" style="left:9.2px;top:255.9px;width:6.2px;height:1.5px;background:#9cc0a8"></i><i class="a" style="left:16.4px;top:255.9px;width:9.8px;height:1.5px;background:#a8c8c0"></i><i class="a" style="left:27.2px;top:255.9px;width:1.6px;height:1.5px;background:#7a5fa8"></i><i class="a" style="left:30.7px;top:255.9px;width:3.3px;height:1.5px;background:#7a5fa8"></i><i class="a" style="left:35.0px;top:255.9px;width:1.2px;height:1.5px;background:#7a5fa8"></i><i class="a" style="left:37.3px;top:255.9px;width:1.2px;height:1.5px;background:#7a5fa8"></i><i class="a" style="left:10.0px;top:259.2px;width:17.2px;height:2.0px;background:#7fb58e"></i><i class="a" style="left:27.5px;top:259.2px;width:1.2px;height:2.0px;background:#f0a0b8"></i><i class="a" style="left:10.6px;top:263.1px;width:3.9px;height:1.6px;background:#b4b4b4"></i><i class="a" style="left:11.5px;top:267.0px;width:2.9px;height:2.0px;background:#b4b4b4"></i><i class="a" style="left:15.0px;top:267.0px;width:6.2px;height:2.0px;background:#7a5fa8"></i><i class="a" style="left:21.3px;top:267.0px;width:3.5px;height:2.0px;background:#d8b878"></i><i class="a" style="left:10.6px;top:270.9px;width:1.0px;height:1.6px;background:#b4b4b4"></i><i class="a" style="left:11.1px;top:273.8px;width:1.6px;height:1.5px;background:#555"></i><i class="a" style="left:7.2px;top:278.7px;width:0.6px;height:1.5px;background:#f0a0b8"></i><i class="a" style="left:7.2px;top:285.0px;width:7.8px;height:2.0px;background:#5a9a6e"></i><i class="a" style="left:15.0px;top:285.0px;width:3.9px;height:2.0px;background:#2a2070"></i><i class="a" style="left:19.3px;top:285.0px;width:3.9px;height:2.0px;background:#6a9ad0"></i><i class="a" style="left:23.2px;top:285.0px;width:1.6px;height:2.0px;background:#e48888"></i><i class="a" style="left:8.0px;top:289.1px;width:1.2px;height:2.0px;background:#8cb4e4"></i><i class="a" style="left:10.6px;top:289.1px;width:2.0px;height:2.0px;background:#b4b4b4"></i><i class="a" style="left:13.9px;top:289.1px;width:2.5px;height:2.0px;background:#d8b878"></i><i class="a" style="left:8.6px;top:291.0px;width:2.0px;height:2.0px;background:#5a9a6e"></i><i class="a" style="left:11.5px;top:291.0px;width:3.5px;height:2.0px;background:#5a9a6e"></i><i class="a" style="left:8.6px;top:293.0px;width:1.4px;height:2.0px;background:#8cb4e4"></i><i class="a" style="left:15.4px;top:293.0px;width:2.9px;height:2.0px;background:#b4b4b4"></i><i class="a" style="left:9.2px;top:294.9px;width:2.3px;height:2.0px;background:#b4b4b4"></i><i class="a" style="left:13.1px;top:294.9px;width:8.2px;height:2.0px;background:#c8a848"></i><i class="a" style="left:22.9px;top:294.9px;width:4.3px;height:2.0px;background:#2a2070"></i><i class="a" style="left:27.5px;top:294.9px;width:2.0px;height:2.0px;background:#e48888"></i><i class="a" style="left:8.0px;top:299.2px;width:4.5px;height:1.6px;background:#b4b4b4"></i><i class="a" style="left:7.2px;top:305.1px;width:0.8px;height:1.6px;background:#8cb4e4"></i><i class="a" style="left:8.0px;top:305.1px;width:5.9px;height:1.6px;background:#5a9a6e"></i><i class="a" style="left:19.0px;top:305.1px;width:5.9px;height:1.6px;background:#5a9a6e"></i><i class="a" style="left:8.6px;top:309.0px;width:3.3px;height:2.0px;background:#2a2070"></i><i class="a" style="left:9.2px;top:315.0px;width:5.3px;height:2.0px;background:#5a9a6e"></i><i class="a" style="left:15.8px;top:315.0px;width:7.0px;height:2.0px;background:#5a9a6e"></i><i class="a" style="left:23.6px;top:315.0px;width:2.0px;height:2.0px;background:#2a2070"></i><i class="a" style="left:9.2px;top:318.9px;width:3.9px;height:3.9px;background:#b8a060"></i><i class="a" style="left:13.1px;top:318.9px;width:5.9px;height:3.9px;background:#6aa07a"></i><i class="a" style="left:19.7px;top:318.9px;width:2.0px;height:3.9px;background:#2a2070"></i><i class="a" style="left:21.7px;top:318.9px;width:2.5px;height:3.9px;background:#4aa8b0"></i><i class="a" style="left:24.2px;top:318.9px;width:9.8px;height:3.9px;background:#909498"></i><i class="a" style="left:34.0px;top:318.9px;width:1.4px;height:3.9px;background:#5a90d8"></i><i class="a" style="left:35.4px;top:318.9px;width:1.6px;height:3.9px;background:#909498"></i><i class="a" style="left:36.9px;top:318.9px;width:3.9px;height:3.9px;background:#4aa8b0"></i><i class="a" style="left:40.8px;top:318.9px;width:8.2px;height:3.9px;background:#909498"></i><i class="a" style="left:0.8px;top:312.9px;width:2.9px;height:10.4px;background:#5fa870"></i><i class="a" style="left:7.2px;top:326.6px;width:0.6px;height:1.5px;background:#f0a0b8"></i><i class="a" style="left:7.2px;top:331.0px;width:41.8px;height:2.0px;background:#dcdcdc"></i><div class="hl" style="left:0;top:336px;width:60px;background:#e2e3e4"></div><div class="a" style="left:0;top:374px;width:60px;height:4px;border:1px solid #c9cbcd;border-bottom:none"></div></div>
</div>
<div class="a" style="left:736px;top:32px;width:23px;height:377px;background:#eff0f1;border-left:1px solid #b0b3b5"></div>
</div>
</div>
<div id="w2">
<!-- titlebar -->
<div class="a" style="left:0;top:0;width:769px;height:29px;background:#475057"></div>
<svg style="left:5px;top:5px" width="18" height="18" viewBox="0 0 18 18"><use href="#kdev"/></svg>
<div class="t" style="left:216px;top:6px;color:#fcfcfc;letter-spacing:-.05px">ksensors-0.7.3_qt3-cmake-compile-only:src/lmsensors.cpp — KDevelop</div>
<!-- menubar -->
<div class="a" style="left:0;top:28px;width:769px;height:21px">
<div class="t" style="left:10px;top:2px"><u>S</u>essione</div>
<div class="t" style="left:78px;top:2px"><u>P</u>rogetto</div>
<div class="t" style="left:143px;top:2px"><u>E</u>segui</div>
<div class="t" style="left:197px;top:2px"><u>N</u>avigazione</div>
<div class="a" style="left:282px;top:1px;width:12px;height:19px;background:#e3e5e6"></div><div class="vl" style="left:287px;top:5px;height:12px;background:#7b7e81"></div>
<div class="t" style="left:304px;top:2px"><u>F</u>ile</div>
<div class="t" style="left:339px;top:2px"><u>M</u>odifica</div>
<div class="t" style="left:404px;top:2px">Visuali<u>z</u>za</div>
<div class="t" style="left:478px;top:2px">S<u>t</u>rumenti</div>
<div class="t" style="left:552px;top:2px">Se<u>l</u>ezione</div>
<div class="t" style="left:624px;top:2px"><u>V</u>ai</div>
<div class="t" style="left:656px;top:2px"><u>C</u>odice</div>
<div class="t" style="left:718px;top:1px;font-size:15px">»</div>
<div class="a" style="left:735px;top:3px;width:6px;height:6px;background:#1cbcd8"></div>
<div class="a" style="left:743px;top:3px;width:6px;height:6px;background:#232629"></div>
<div class="a" style="left:735px;top:11px;width:6px;height:6px;background:#1cbcd8"></div>
<div class="a" style="left:743px;top:11px;width:6px;height:6px;background:#1cbcd8"></div>
<div class="vl" style="left:761px;top:5px;height:12px;width:2px;background:#c9cbcd"></div>
</div>
<div class="hl" style="left:0;top:48px;width:769px;background:#d1d3d4"></div>
<!-- toolbar -->
<div class="a tool" style="left:0;top:49px;width:769px;height:35px">
<svg style="left:7px;top:7px" width="22" height="22" viewBox="0 0 22 22"><use href="#gear"/></svg>
<div class="t" style="left:31px;top:10px">Compila</div>
<svg style="left:101px;top:9px" width="18" height="18" viewBox="0 0 18 18"><circle cx="9" cy="9" r="7.500" fill="none" stroke="#da4453" stroke-width="1.100"/><path d="M5 9h8" stroke="#da4453" stroke-width="1.800"/></svg>
<div class="t" style="left:123px;top:10px">Ferma</div>
<div class="arr ad" style="left:167px;top:25px;border-left-width:3px;border-right-width:3px;border-top-width:4px"></div>
<div class="t" style="left:196px;top:9px;font-size:15px">»</div>
<div class="a" style="left:214px;top:7px;width:213px;height:23px;border:1px solid #b2b5b7;border-radius:3px;background:#fcfcfc"></div>
<div class="t" style="left:218px;top:10px;color:#a0a3a5">Apertura veloce...</div>
<svg style="left:441px;top:10px" width="12" height="16" viewBox="0 0 12 16"><path d="M8.500 2L2.500 8l6 6" fill="none" stroke="#232629" stroke-width="1.200"/></svg>
<div class="arr ad" style="left:462px;top:16px;border-left-width:4.500px;border-right-width:4.500px;border-top-width:4.500px"></div>
<div class="a" style="left:477px;top:7px;width:213px;height:23px;border:1px solid #b2b5b7;border-radius:3px;background:#fcfcfc;overflow:hidden"><div class="t" style="left:3px;top:3px;letter-spacing:-.08px">LMSensors::childEvent(QChildEvent</div></div>
<svg style="left:701px;top:10px" width="12" height="16" viewBox="0 0 12 16"><path d="M3.500 2l6 6-6 6" fill="none" stroke="#7a7d80" stroke-width="1.200"/></svg>
<div class="arr ad" style="left:722px;top:16px;border-left-width:4.500px;border-right-width:4.500px;border-top-width:4.500px;border-top-color:#c9cbcc"></div>
<svg style="left:745px;top:9px" width="18" height="18" viewBox="0 0 18 18"><path d="M.5 1.500h15v15H.5z" fill="none" stroke="#232629"/><path d="M5.500 5.500l6 3.500-6 3.500z" fill="#232629"/></svg>
<div class="t" style="left:766px;top:10px">Continua</div>
</div>
<div class="hl" style="left:0;top:84px;width:769px;background:#b0b3b5"></div>
<!-- sidebar -->
<div class="a" style="left:0;top:85px;width:23px;height:412px">
<div class="a" style="left:0;top:109px;width:22px;height:88px;background:#dfe0e1;border:1px solid #b4b6b8;border-left:none;border-radius:0 0 3px 0"></div>
<div class="t" style="left:-20px;top:47px;width:64px;transform:rotate(-90deg);text-align:left;letter-spacing:.2px">Filesystem</div>
<svg style="left:4px;top:91px" width="14" height="13" viewBox="0 0 14 13"><path d="M1 1h12v11H1z" fill="none" stroke="#232629" stroke-width="1.300"/><path d="M6 1h7v4H6z" fill="#232629"/><path d="M9.500 7.500c-1.500 0-2 1-1 1.800s.5 2-1 1.800" fill="none" stroke="#232629" stroke-width=".9"/></svg>
<div class="t" style="left:-14px;top:143px;width:52px;transform:rotate(-90deg);text-align:left">Variabili</div>
<svg style="left:5px;top:182px" width="12" height="12" viewBox="0 0 12 12"><circle cx="6" cy="6" r="5.500" fill="#c9cdd0"/><circle cx="6" cy="6" r="4.200" fill="#2e9e5e"/><circle cx="4.500" cy="7" r="1.300" fill="#d6f3e0"/></svg>
</div>
<div class="vl" style="left:22px;top:85px;height:412px;background:#a9acae"></div>
<!-- Variabili panel 2 -->
<div class="a" style="left:23px;top:85px;width:496px;height:412px">
<div class="a" style="left:0;top:20px;width:495px;height:30px;background:#f6f7f7"></div>
<div class="t" style="left:4px;top:2px">Variabili</div>
<svg style="left:467px;top:5px" width="11" height="11" viewBox="0 0 11 11"><rect x=".5" y=".5" width="10" height="10" rx="2" fill="none" stroke="#232629"/><path d="M4.500 2.500h4v4M2.500 4.500h4v4h-4z" fill="none" stroke="#232629"/></svg>
<svg style="left:482px;top:5px" width="11" height="11" viewBox="0 0 11 11"><rect x=".5" y=".5" width="10" height="10" rx="2" fill="none" stroke="#232629"/><path d="M2.500 2.500l6 6M8.500 2.500l-6 6" stroke="#232629" stroke-width="2.200"/></svg>
<div class="btn" style="left:4px;top:24px;width:24px;height:23px"></div>
<svg style="left:10px;top:29px" width="12" height="12" viewBox="0 0 12 12"><path d="M1 6h4M7 6h4M6 1v10" stroke="#232629" stroke-width="1.400" fill="none"/></svg>
<div class="hl" style="left:0;top:50px;width:496px;background:#c4c6c8"></div>
<div class="view" style="left:0;top:52px;width:494px;height:370px;overflow:hidden">
<div class="a" style="left:0;top:0;width:494px;height:18px;background:linear-gradient(#fbfbfb,#f1f2f3);border-bottom:1px solid #bfc1c3"></div>
<div class="vl" style="left:153px;top:0;height:18px;background:#c9cbcd"></div>
<div class="vl" style="left:294px;top:0;height:18px;background:#c9cbcd"></div>
<div class="t" style="left:3px;top:0">Nome</div>
<div class="arr ad" style="left:141px;top:6px;border-left-width:4px;border-right-width:4px;border-top-width:4px"></div>
<div class="t" style="left:157px;top:0">Valore</div>
<div class="t" style="left:298px;top:0">Tipo</div>
<div class="row" style="top:19px;height:16px;width:491px;background:#eef6fb;border:1px solid #a9d3ec;line-height:14px"><span style="left:22px">Auto</span></div>
<div class="row" style="top:34px"><i class="arr ad" style="left:6px;top:5px"></i><span style="left:23px">Locali</span></div>
<div class="row" style="top:49px"><i class="arr ad" style="left:26px;top:5px"></i><span style="left:43px">aaaa</span><span class="" style="left:158px">0x10da0d0</span><span style="left:299px">SensorsList *</span></div>
<div class="row" style="top:64px"><span style="left:63px">clas</span><span class="o" style="left:158px">Sensor::lmSensor</span><span style="left:299px">Sensor::SensorClass</span></div>
<div class="row" style="top:79px"><i class="arr ar" style="left:48px;top:3px"></i><span style="left:63px">description</span><span class="o" style="left:158px">""</span><span style="left:299px">QString</span></div>
<div class="row" style="top:94px"><span style="left:63px">ksConfig</span><span class="o" style="left:158px">0x206c6562616c2020</span><span style="left:299px">KConfig *</span></div>
<div class="row" style="top:109px"><span style="left:63px">metaObj</span><span class="r" style="left:158px">0x0</span><span style="left:299px">QMetaObject *</span></div>
<div class="row" style="top:124px"><span style="left:63px">monitorized</span><span class="o" style="left:158px">true</span><span style="left:299px">bool</span></div>
<div class="row" style="top:139px"><span style="left:63px">QObject</span><span class="o" style="left:158px">{...}</span><span style="left:299px">QObject</span></div>
<div class="row" style="top:154px"><span style="left:63px">tempScale</span><span class="o" style="left:158px">Sensor::dgCelsius</span><span style="left:299px">Sensor::TempScale</span></div>
<div class="row" style="top:169px"><span style="left:63px">updateInterval</span><span class="o" style="left:158px">5000</span><span style="left:299px">int</span></div>
<div class="row" style="top:184px"><i class="arr ad" style="left:26px;top:5px"></i><span style="left:43px">e</span><span class="" style="left:158px">0x10da160</span><span style="left:299px">QChildEvent *</span></div>
<div class="row" style="top:199px"><span style="left:63px">c</span><span class="o" style="left:158px">0x10da0d0</span><span style="left:299px">QObject *</span></div>
<div class="row" style="top:214px"><span style="left:63px">QEvent</span><span class="o" style="left:158px">{...}</span><span style="left:299px">QEvent</span></div>
<div class="row" style="top:229px"><i class="arr ad" style="left:26px;top:5px"></i><span style="left:43px">this</span><span class="" style="left:158px">0x10d8dd0</span><span style="left:299px">LMSensors * const</span></div>
<div class="row" style="top:244px"><span style="left:63px">metaObj</span><span class="o" style="left:158px">0x1119750</span><span style="left:299px">QMetaObject *</span></div>
<div class="row" style="top:259px"><span style="left:63px">QObject</span><span class="o" style="left:158px">{...}</span><span style="left:299px">QObject</span></div>
</div>
</div>
<!-- editor 2 -->
<div class="a" style="left:527px;top:85px;width:242px;height:100px">
<svg style="left:3px;top:8px" width="14" height="16" viewBox="0 0 14 16"><path d="M1 2.500h10M3 5.500h8M5 8.500h6" stroke="#232629" fill="none"/><path d="M10.500 5v7" stroke="#232629" stroke-width="1.300"/><ellipse cx="8.700" cy="11.500" rx="2.200" ry="1.700" fill="#232629"/></svg>
<div class="arr ad" style="left:13px;top:23px;border-left-width:3px;border-right-width:3px;border-top-width:4px"></div>
<div class="a" style="left:21px;top:1px;width:93px;height:32px;background:#fcfcfc;border:1px solid #bfc1c3;border-bottom:none;border-radius:3px 3px 0 0;overflow:hidden"><div class="t" style="left:10px;top:7px;color:#4a6068">lmsensors.cpp</div></div>
<div class="a" style="left:113px;top:2px;width:16px;height:29px;border:1px solid #bfc1c3;border-radius:3px 0 0 3px;background:linear-gradient(#f6f6f6,#e4e5e6)"></div>
<div class="a" style="left:128px;top:2px;width:16px;height:29px;border:1px solid #bfc1c3;border-radius:0 3px 3px 0;background:#f6f6f6"></div>
<div class="arr" style="left:118px;top:12px;border-top:4px solid transparent;border-bottom:4px solid transparent;border-right:4px solid #c3c5c7"></div>
<div class="arr" style="left:135px;top:12px;border-top:4px solid transparent;border-bottom:4px solid transparent;border-left:4px solid #55595c"></div>
<div class="t" style="left:174px;top:9px">Riga: 141 Colonna: 1</div>
<div class="a" style="left:-3px;top:33px;width:245px;height:56px;background:#fcfcfc;border-top:1px solid #c4c6c8;border-bottom:1px solid #c4c6c8;border-left:1px solid #cfd1d2;overflow:hidden">
<div class="a" style="left:0;top:0;width:16px;height:55px;background:#ececec"></div>
<div class="a" style="left:19px;top:15px;width:36px;height:15px;background:repeating-conic-gradient(#e8e8e8 0 25%,#fcfcfc 0 50%) 0 0/2px 2px"></div>
<div class="code" style="left:19px;top:2px;width:230px">
<div class="cl" style="top:0">     <span class="gb" style="position:relative">sensor<svg style="left:0;top:12px" width="43" height="3" viewBox="0 0 43 3"><path d="M0 2L2 0L4 2L6 0L8 2L10 0L12 2L14 0L16 2L18 0L20 2L22 0L24 2L26 0L28 2L30 0L32 2L34 0L36 2L38 0L40 2L42 0L44 2" fill="none" stroke="#e0606c" stroke-width=".8"/></svg></span><span class="m">-</span></div>
<div class="cl" style="top:15px">     <span class="m">&gt;</span><span class="dp">setMonitorized</span><span class="m">(</span><span class="dr" style="color:#b0282c">enable</span><span class="m">);</span></div>
<div class="cl" style="top:30px"><span class="m">}</span></div>
</div>
<div class="a" style="left:242.500px;top:14px;width:3px;height:15px;background:#da4453"></div>
</div>
</div>
<div class="a" style="left:671px;top:175px;width:17px;height:1px;background:repeating-linear-gradient(90deg,#a9acae 0 1px,transparent 1px 3px)"></div>
<!-- output toolview -->
<div class="a" style="left:527px;top:180px;width:242px;height:317px">
<svg style="left:1px;top:3px" width="11" height="11" viewBox="0 0 11 11"><rect x=".5" y=".5" width="10" height="10" rx="2" fill="none" stroke="#232629"/><path d="M2.500 2.500l6 6M8.500 2.500l-6 6" stroke="#232629" stroke-width="2.200"/></svg>
<svg style="left:1px;top:19px" width="11" height="11" viewBox="0 0 11 11"><rect x=".5" y=".5" width="10" height="10" rx="2" fill="none" stroke="#232629"/><path d="M4.500 2.500h4v4M2.500 4.500h4v4h-4z" fill="none" stroke="#232629"/></svg>
<div class="a" style="left:16px;top:0;width:226px;height:30px;background:#f7f7f8"></div>
<svg style="left:25px;top:8px" width="13" height="13" viewBox="0 0 13 13"><circle cx="6.500" cy="6.500" r="6.200" fill="#da4453"/><path d="M4.200 4.200l4.600 4.600M8.800 4.200l-4.600 4.600" stroke="#fcfcfc" stroke-width="1.300"/></svg>
<div class="vl" style="left:47px;top:8px;height:14px;background:#d5d7d8"></div>
<svg style="left:56px;top:8px" width="14" height="13" viewBox="0 0 14 13"><path d="M1.500 .5v12M8 1L3.500 6.500 8 12M12.500 1L8 6.500l4.500 5.500" fill="none" stroke="#232629" stroke-width="1.100"/></svg>
<svg style="left:82px;top:8px" width="12" height="13" viewBox="0 0 12 13"><path d="M8 1L3 6.500 8 12" fill="none" stroke="#232629" stroke-width="1.100"/></svg>
<svg style="left:107px;top:8px" width="12" height="13" viewBox="0 0 12 13"><path d="M4 1l5 5.500L4 12" fill="none" stroke="#232629" stroke-width="1.100"/></svg>
<svg style="left:130px;top:8px" width="14" height="13" viewBox="0 0 14 13"><path d="M12.500 .5v12M1.500 1L6 6.500 1.500 12M6 1l4.500 5.500L6 12" fill="none" stroke="#232629" stroke-width="1.100"/></svg>
<svg style="left:156px;top:8px" width="13" height="13" viewBox="0 0 13 13"><path d="M.5 3.500v-3h3M9.500 .5h3v3M12.500 9.500v3h-3M3.500 12.500h-3v-3" fill="none" stroke="#232629"/><path d="M3 3h3v3H3zM7 3h3v3H7zM3 7h3v3H3zM7 7h3v3H7z" fill="#232629"/></svg>
<svg style="left:181px;top:8px" width="13" height="13" viewBox="0 0 13 13"><path d="M1 1h5l0 2h-3v7h-2z" fill="#232629"/><path d="M4.500 3.500h4l3 3v5.500h-7z" fill="none" stroke="#232629" stroke-width="1.300"/></svg>
<svg style="left:204px;top:8px" width="16" height="13" viewBox="0 0 16 13"><path d="M5 .5h11v12H5L0 6.500z" fill="#232629"/><path d="M8 4l5 5M13 4l-5 5" stroke="#fcfcfc" stroke-width="1.500"/></svg>
<div class="vl" style="left:229px;top:8px;height:14px;background:#d5d7d8"></div>
<div class="a" style="left:234px;top:3px;width:20px;height:23px;border:1px solid #b2b5b7;border-radius:3px;background:#fcfcfc"></div>
<div class="t" style="left:238px;top:6px;color:#a0a3a5">C</div>
<div class="hl" style="left:16px;top:29px;width:226px;background:#c4c6c8"></div>
<!-- tabs -->
<div class="a" style="left:17px;top:33px;width:79px;height:22px;background:#e9eaeb;border:1px solid #c2c4c6;border-bottom:none;border-radius:2px 2px 0 0"></div>
<div class="a" style="left:95px;top:33px;width:78px;height:22px;background:#e9eaeb;border:1px solid #c2c4c6;border-bottom:none;border-radius:2px 2px 0 0"></div>
<div class="a" style="left:172px;top:31px;width:80px;height:27px;background:#fcfcfc;border:1px solid #c2c4c6;border-bottom:none;border-radius:3px 3px 0 0"></div>
<div class="t" style="left:30px;top:36px">ksensors</div>
<div class="t" style="left:107px;top:36px">ksensors</div>
<div class="t" style="left:184px;top:35px">ksensors</div>
<div class="a" style="left:16px;top:57px;width:231px;height:262px;background:#fcfcfc;border-left:1px solid #c2c4c6;border-top:1px solid #c2c4c6"></div>
<div class="a" style="left:173px;top:57px;width:78px;height:1px;background:#fcfcfc"></div>
<div class="code" style="left:20px;top:61px;font-size:12px;color:#232629;line-height:15px">kbuildsycoca running...
DCOP Cleaning up dead connections.</div>
</div>
</div>

<div class="tb" id="taskbar">
<div class="a" style="left:126px;top:0;width:150px;height:30px;background:#45494e"></div>
<div class="a" style="left:278px;top:0;width:150px;height:30px;background:#45494e"></div>
<div class="a" style="left:430px;top:0;width:149px;height:30px;background:#45494e"></div>
<div class="a" style="left:581px;top:0;width:149px;height:30px;background:#45494e"></div>
<div class="a" style="left:732px;top:0;width:151px;height:30px;background:#34627f;border-top:2px solid #3daee9"></div>
<div class="a" style="left:885px;top:0;width:150px;height:30px;background:#45494e"></div>
<svg style="left:5px;top:4px" width="22" height="22" viewBox="0 0 22 22"><path d="M11 .5A10.500 10.500 0 1 1 11 21.500H2.500a2 2 0 0 1-2-2V11A10.500 10.500 0 0 1 11 .5z" fill="#51a2da"/><path d="M14.800 6.200a2.700 2.700 0 0 0-3.600 2.600v5.200a3 3 0 1 1-3-3h5.200" fill="none" stroke="#294172" stroke-width="1.700" stroke-linecap="round"/></svg>
<svg style="left:37px;top:7px" width="17" height="17" viewBox="0 0 17 17"><path d="M.5 .5h16v16H.5z" fill="none" stroke="#fcfcfc"/><path d="M2 13.500h13" stroke="#fcfcfc" stroke-width="1.500"/></svg>
<div class="a" style="left:69px;top:5px;width:20px;height:20px;background:linear-gradient(135deg,#3a3e42,#1c1f22 60%);border-radius:1px"></div>
<svg style="left:69px;top:5px" width="20" height="20" viewBox="0 0 20 20"><path d="M2.500 6.500h9" stroke="#3daee9" stroke-width="1.200"/><path d="M14 6.500h3.500" stroke="#6a6e72" stroke-width="1.200"/><circle cx="13.800" cy="6.500" r="1.700" fill="#fcfcfc"/><path d="M2.500 12.500h4" stroke="#3daee9" stroke-width="1.200"/><path d="M8 12.500h9.500" stroke="#6a6e72" stroke-width="1.200"/><circle cx="6.800" cy="12.500" r="1.700" fill="#fcfcfc"/></svg>
<svg style="left:100px;top:4px" width="20" height="22" viewBox="0 0 20 22"><defs><linearGradient id="bg1" x1="0" y1="0" x2="0" y2="1"><stop offset="0" stop-color="#2cb4f4"/><stop offset="1" stop-color="#1a86e8"/></linearGradient></defs><path d="M6 7V5.500a3 3 0 016 0V7" fill="none" stroke="#2a9be0" stroke-width="1"/><path d="M1 6.500h16.500V22H1z" fill="url(#bg1)"/><path d="M9 12l2 2-2 2" fill="none" stroke="#c8e8fc" stroke-width="1.200"/><circle cx="6.500" cy="14" r=".8" fill="#7cc8f8"/><circle cx="8" cy="18" r=".8" fill="#7cc8f8"/></svg>
<svg style="left:128px;top:4px" width="22" height="22" viewBox="0 0 22 22"><path d="M1 2h7l2 3h11v15H1z" fill="#147eb8"/><path d="M1 7h20v13H1z" fill="#3daee9"/><path d="M1 7h8l2-2h10v2z" fill="#fcfcfc" opacity=".9"/></svg>
<div class="t" style="left:154px;top:7px;font-size:13.400px">devel — Dolphin</div>
<div class="a" style="left:282px;top:6px;width:18px;height:18px;background:#2e3236"></div>
<svg style="left:286px;top:9px" width="10" height="12" viewBox="0 0 10 12"><path d="M2.500 2l4.500 4-4.500 4" fill="none" stroke="#8a8e92" stroke-width="1.200"/></svg>
<div class="t" style="left:306px;top:7px;font-size:13.400px">~/Scrivania/devel/...</div>
<svg style="left:433px;top:4px" width="24" height="24" viewBox="0 0 24 24"><circle cx="11" cy="10.500" r="10" fill="#8a3ea8"/><path d="M7 5.500c3 1.500 6 .5 8-.5-2 2.500-5 4-6.500 5 2.500.5 5 .5 6.500 0-3 2-7 3.500-7 5.500 0 1.500 4 1.500 8 0" fill="none" stroke="#fcfcfc" stroke-width="1.400"/><circle cx="9" cy="19.500" r="3.800" fill="#2eb85c" stroke="#1c1f22" stroke-width=".6"/><path d="M7 19.500h4M9 17.500v4" stroke="#fff" stroke-width="1.100"/></svg>
<div class="t" style="left:458px;top:7px;font-size:13.400px">Emacs</div>
<svg style="left:584px;top:3px" width="24" height="24" viewBox="0 0 24 24"><circle cx="12" cy="13" r="10" fill="#ff7a1a"/><path d="M12 1c2 2 5 3 6 7 2 1 3.500 4 3 7A10 10 0 012 13c0-3 1-5 3-7 0 2 1 3 2 3 0-3 2-5 5-8z" fill="#ffb01f"/><circle cx="12.500" cy="13.500" r="5.500" fill="#6a3fd0"/><path d="M7 11c2-2 6-2.500 9 0-2-.5-3 .5-4 1.500-1.500 1.500-4 1-5-1.500z" fill="#ff8a1a"/></svg>
<div class="t" style="left:610px;top:7px;font-size:13.400px">Qt: Get child cont...</div>
<svg style="left:735px;top:3px" width="24" height="24" viewBox="0 0 24 24"><g transform="scale(1.2)"><use href="#kdev"/></g><circle cx="7" cy="19.500" r="3.800" fill="#2eb85c" stroke="#1c1f22" stroke-width=".6"/><path d="M5 19.500h4M7 17.500v4" stroke="#fff" stroke-width="1.100"/></svg>
<div class="t" style="left:762px;top:7px;font-size:13.400px">KDevelop</div>
<svg style="left:888px;top:4px" width="24" height="24" viewBox="0 0 24 24"><path d="M1 15l11-7 11 7-11 7z" fill="#5a5e62"/><path d="M1 15v2l11 6 11-6v-2l-11 7z" fill="#2b2e31"/><path d="M6 15l6-4 6 4-6 4z" fill="#8b8f93"/><path d="M5 2h5M5 4h5M5 6h5M5 8h5M5 10h5" stroke="#e6c300" stroke-width="1.300"/><path d="M5 2h5M5 4h5" stroke="#46c05a" stroke-width="1.300"/></svg>
<div class="t" style="left:914px;top:7px;font-size:13.400px">KSensors</div>
<!-- tray -->
<svg style="left:1052px;top:6px" width="18" height="18" viewBox="0 0 18 18"><path d="M9 1.500c-3 0-4.500 2.500-4.500 5.500v4L2.500 14.500h13L13.500 11V7c0-3-1.500-5.500-4.500-5.500z" fill="none" stroke="#fcfcfc" stroke-width="1.200"/><circle cx="12" cy="15.800" r="1.200" fill="#fcfcfc"/><circle cx="9" cy="1.500" r="1" fill="#fcfcfc"/></svg>
<svg style="left:1082px;top:6px" width="18" height="18" viewBox="0 0 18 18"><circle cx="9" cy="9" r="7.800" fill="none" stroke="#fcfcfc" stroke-width="1.200"/><path d="M9 4v5.500h4.500" fill="none" stroke="#fcfcfc" stroke-width="1.200"/></svg>
<svg style="left:1112px;top:6px" width="18" height="18" viewBox="0 0 18 18"><circle cx="7" cy="8" r="1.600" fill="none" stroke="#fcfcfc"/><circle cx="11" cy="5.500" r="1.600" fill="none" stroke="#fcfcfc"/><path d="M7 9.500V16M11 7v6.500M5.500 16h3M9.500 13.500h3" stroke="#fcfcfc" stroke-width="1.200"/><path d="M3.500 4.500c-1.500 2-1.500 5 0 7M14.500 2.500c1.500 2 1.500 4.500 0 6.500M1.500 3c-2 3-2 7 0 10M16.500 1c2 3 2 6.500 0 9.500" fill="none" stroke="#7d8185" stroke-width=".8"/></svg>
<svg style="left:1141px;top:5px" width="20" height="20" viewBox="0 0 20 20"><path d="M6.500 2.500h12v11h-12" fill="none" stroke="#fcfcfc" stroke-width="1.300"/><path d="M9 16.500h7M12.500 13.500v3" stroke="#fcfcfc" stroke-width="1.500"/><path d="M1.500 1.500h5v5h-5z" fill="none" stroke="#fcfcfc" stroke-width="1.200"/><path d="M3 3.500h2" stroke="#fcfcfc"/><path d="M3.500 6.500v7c0 2 1 3 3 3h2" fill="none" stroke="#fcfcfc" stroke-width="1.200"/></svg>
<svg style="left:1171px;top:5px" width="20" height="20" viewBox="0 0 20 20"><path d="M1.500 7h3v6h-3z" fill="#fcfcfc"/><path d="M5 7l5.500-5v16L5 13z" fill="#fcfcfc"/><path d="M12.500 6.500c1.500 2 1.500 5 0 7" fill="none" stroke="#fcfcfc" stroke-width="1.200"/><path d="M15 4c2.500 3.500 2.500 8.500 0 12" fill="none" stroke="#6d7175" stroke-width="1"/></svg>
<svg style="left:1202px;top:9px" width="14" height="10" viewBox="0 0 14 10"><path d="M1 8.500l6-6.500 6 6.500" fill="none" stroke="#fcfcfc" stroke-width="1.300"/></svg>
<div class="t" style="left:1234px;top:3.500px;font-size:12.300px;line-height:14px;height:14px">17:58</div>
<div class="t" style="left:1228px;top:14.500px;font-size:11.500px;line-height:12px;height:12px">20/05/23</div>
</div>

</body></html>
